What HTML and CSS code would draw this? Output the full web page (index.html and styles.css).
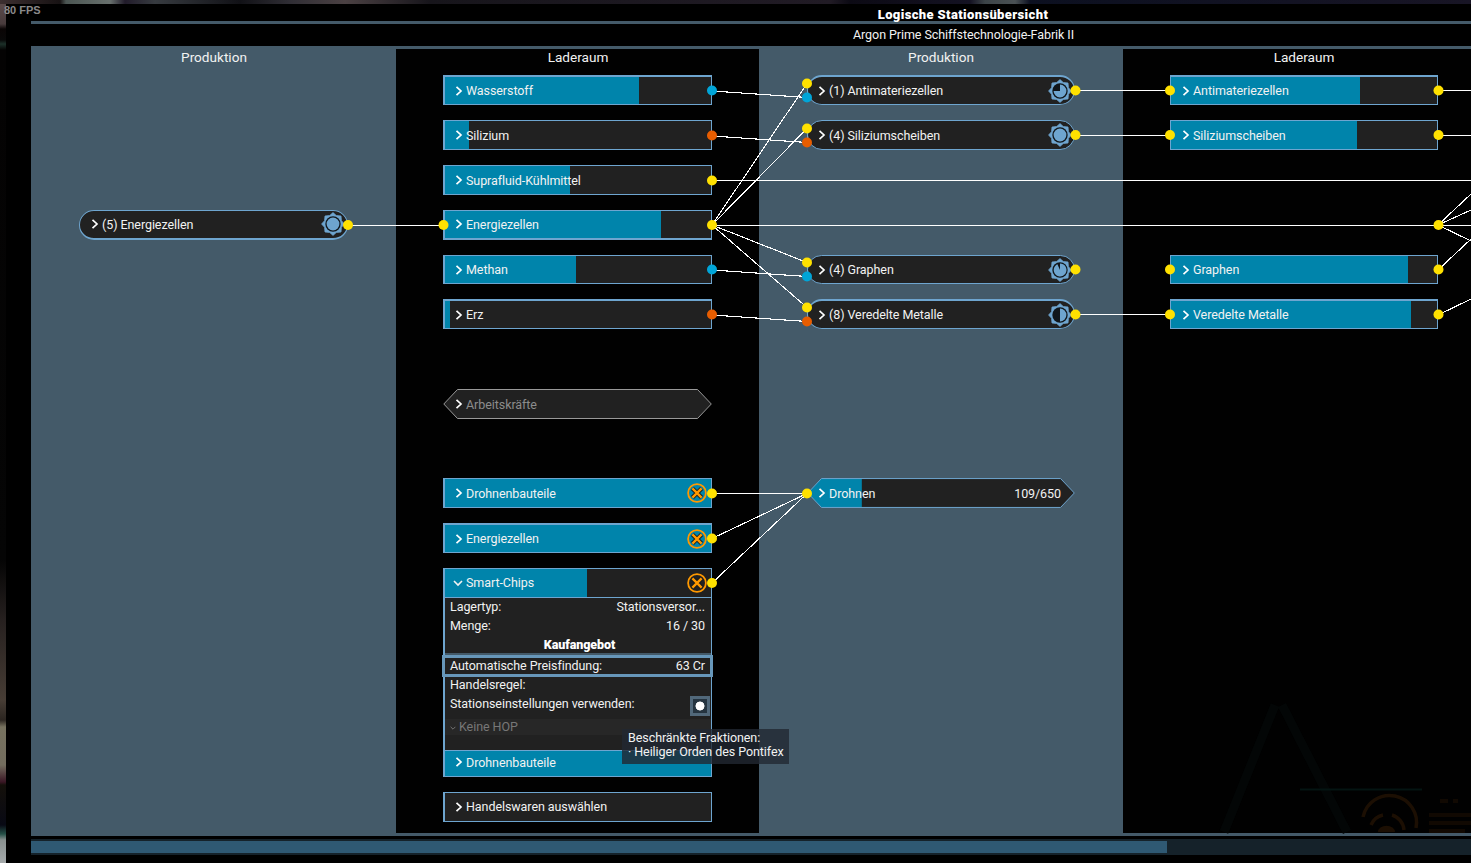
FILE: index.html
```html
<!DOCTYPE html>
<html lang="de">
<head>
  <meta charset="utf-8">
  <title>Logische Stationsübersicht</title>
  <link rel="stylesheet" href="styles.css">
</head>
<body>
<svg class="defs" width="0" height="0">
  <symbol id="right" viewBox="0 0 8 10"><path d="M1.5 .8 L6 5 L1.5 9.2" fill="none" stroke="#fff" stroke-width="1.7"/></symbol>
  <symbol id="down" viewBox="0 0 10 8"><path d="M1 2 L5 6 L9 2" fill="none" stroke="currentColor" stroke-width="1.6"/></symbol>
  <symbol id="gear" viewBox="-12 -12 24 24">
    <path d="M0 -11.4 L3.3 -8.4 L8 -8 L8.4 -3.3 L11.4 0 L8.4 3.3 L8 8 L3.3 8.4 L0 11.4 L-3.3 8.4 L-8 8 L-8.4 3.3 L-11.4 0 L-8.4 -3.3 L-8 -8 L-3.3 -8.4 Z" fill="#6ea5cf" stroke="#6ea5cf" stroke-width=".8" stroke-linejoin="round"/>
    <circle r="7.7" fill="#10161b"/>
  </symbol>
  <symbol id="stop" viewBox="-10 -10 20 20">
    <circle r="8.9" fill="none" stroke="#ff9900" stroke-width="1.8"/>
    <path d="M-4.6 -4.6 L4.6 4.6 M4.6 -4.6 L-4.6 4.6" stroke="#15191b" stroke-width="4.2"/>
    <path d="M-4.6 -4.6 L4.6 4.6 M4.6 -4.6 L-4.6 4.6" stroke="#ff9900" stroke-width="2.4"/>
  </symbol>
</svg>

<div class="fps">80 FPS</div>
<div class="window">
  <h1 class="title">Logische Stationsübersicht</h1>
  <div class="subtitle">Argon Prime Schiffstechnologie-Fabrik II</div>

  <div class="board">
    <div class="column production first">
      <h2>Produktion</h2>
      <div class="nodes">
        <div class="node pill r4"><svg class="caret"><use href="#right"/></svg><span>(5) Energiezellen</span>
          <svg class="gear" viewBox="-12 -12 24 24"><use href="#gear" x="-12" y="-12" width="24" height="24"/><circle r="6.4" fill="#6ea5cf"/></svg></div>
      </div>
    </div>

    <div class="column storage second">
      <h2>Laderaum</h2>
      <div class="nodes">
        <div class="node r1"><div class="fill" style="width: 194px"></div><svg class="caret"><use href="#right"/></svg><span>Wasserstoff</span></div>
        <div class="node r2"><div class="fill" style="width: 24px"></div><svg class="caret"><use href="#right"/></svg><span>Silizium</span></div>
        <div class="node r3"><div class="fill" style="width: 125px"></div><svg class="caret"><use href="#right"/></svg><span>Suprafluid-Kühlmittel</span></div>
        <div class="node r4"><div class="fill" style="width: 216px"></div><svg class="caret"><use href="#right"/></svg><span>Energiezellen</span></div>
        <div class="node r5"><div class="fill" style="width: 131px"></div><svg class="caret"><use href="#right"/></svg><span>Methan</span></div>
        <div class="node r6"><div class="fill" style="width: 5px"></div><svg class="caret"><use href="#right"/></svg><span>Erz</span></div>
        <div class="node hex r8">
          <svg class="shape" viewBox="0 0 269 30"><path d="M.8 15 L14.5 .5 H254.5 L268.3 15 L254.5 29.5 H14.5 Z" fill="#212121" stroke="#999"/></svg>
          <svg class="caret"><use href="#right"/></svg><span class="muted">Arbeitskräfte</span></div>
        <div class="node r10"><div class="fill" style="width: 266px"></div><svg class="caret"><use href="#right"/></svg><span>Drohnenbauteile</span><svg class="stop"><use href="#stop"/></svg></div>
        <div class="node r11"><div class="fill" style="width: 266px"></div><svg class="caret"><use href="#right"/></svg><span>Energiezellen</span><svg class="stop"><use href="#stop"/></svg></div>
        <div class="expanded r12">
          <div class="node"><div class="fill" style="width: 142px"></div><svg class="caret open"><use href="#down"/></svg><span>Smart-Chips</span><svg class="stop"><use href="#stop"/></svg></div>
          <div class="details">
            <div class="row"><span>Lagertyp:</span><span>Stationsversor...</span></div>
            <div class="row"><span>Menge:</span><span>16 / 30</span></div>
            <div class="row offer">Kaufangebot</div>
            <div class="row selected"><span>Automatische Preisfindung:</span><span>63 Cr</span></div>
            <div class="row"><span>Handelsregel:</span></div>
            <div class="row"><span>Stationseinstellungen verwenden:</span><i class="check"></i></div>
            <div class="dropdown"><svg viewBox="0 0 10 8"><use href="#down"/></svg>Keine HOP</div>
          </div>
        </div>
        <div class="node r16"><div class="fill" style="width: 266px"></div><svg class="caret"><use href="#right"/></svg><span>Drohnenbauteile</span></div>
        <div class="node r17"><svg class="caret"><use href="#right"/></svg><span>Handelswaren auswählen</span></div>
      </div>
    </div>

    <div class="column production third">
      <h2>Produktion</h2>
      <div class="nodes">
        <div class="node pill r1"><svg class="caret"><use href="#right"/></svg><span>(1) Antimateriezellen</span>
          <svg class="gear" viewBox="-12 -12 24 24"><use href="#gear" x="-12" y="-12" width="24" height="24"/><path d="M0 0 V-6.4 A6.4 6.4 0 1 1 -6.4 0 Z" fill="#6ea5cf"/></svg></div>
        <div class="node pill r2"><svg class="caret"><use href="#right"/></svg><span>(4) Siliziumscheiben</span>
          <svg class="gear" viewBox="-12 -12 24 24"><use href="#gear" x="-12" y="-12" width="24" height="24"/><circle r="6.4" fill="#6ea5cf"/></svg></div>
        <div class="node pill r5"><svg class="caret"><use href="#right"/></svg><span>(4) Graphen</span>
          <svg class="gear" viewBox="-12 -12 24 24"><use href="#gear" x="-12" y="-12" width="24" height="24"/><path d="M0 0 V-6.4 A6.4 6.4 0 1 1 -2.6 -5.8 Z" fill="#6ea5cf"/></svg></div>
        <div class="node pill r6"><svg class="caret"><use href="#right"/></svg><span>(8) Veredelte Metalle</span>
          <svg class="gear" viewBox="-12 -12 24 24"><use href="#gear" x="-12" y="-12" width="24" height="24"/><path d="M0 -6.4 A6.4 6.4 0 0 1 0 6.4 Z" fill="#6ea5cf"/></svg></div>
        <div class="node hex r10">
          <svg class="shape" viewBox="0 0 269 30">
            <path d="M.8 15 L14.5 .5 H254.5 L268.3 15 L254.5 29.5 H14.5 Z" fill="#212121"/>
            <path d="M.8 15 L14.5 .5 H55 V29.5 H14.5 Z" fill="#0084ab"/>
            <path d="M.8 15 L14.5 .5 H254.5 L268.3 15 L254.5 29.5 H14.5 Z" fill="none" stroke="#6ea5cf"/>
          </svg>
          <svg class="caret"><use href="#right"/></svg><span>Drohnen</span><span class="amount">109/650</span></div>
      </div>
    </div>

    <div class="column storage fourth">
      <h2>Laderaum</h2>
      <div class="nodes">
        <div class="node r1"><div class="fill" style="width: 189px"></div><svg class="caret"><use href="#right"/></svg><span>Antimateriezellen</span></div>
        <div class="node r2"><div class="fill" style="width: 186px"></div><svg class="caret"><use href="#right"/></svg><span>Siliziumscheiben</span></div>
        <div class="node r5"><div class="fill" style="width: 237px"></div><svg class="caret"><use href="#right"/></svg><span>Graphen</span></div>
        <div class="node r6"><div class="fill" style="width: 240px"></div><svg class="caret"><use href="#right"/></svg><span>Veredelte Metalle</span></div>
      </div>
    </div>

    <!-- connections and ports between the nodes -->
    <svg class="links" viewBox="31 46 1440 790">
      <g stroke="#fff" stroke-width="1.1" fill="none" shape-rendering="crispEdges">
        <path d="M348 225.5 H444 M712 180.5 H1471 M712 225.5 H1471 M1075 90.5 H1170 M1075 135.5 H1170 M1075 314.5 H1170 M1438 90.5 H1471 M1438 135.5 H1471 M712 493.5 H807"/>
        <path d="M712 91 L807 97.500 M712 136 L807 142.500 M712 270 L807 276.500 M712 315 L807 321.500"/>
        <path d="M712 225 L807 83.500 M712 225 L807 128.500 M712 225 L807 262.500 M712 225 L807 307.500"/>
        <path d="M712 538.500 L807 493.500 L712 583"/>
        <path d="M1438 225 L1471 194 M1438 225 L1471 210 M1438 225 L1471 241 M1438 270 L1471 239 M1438 315 L1471 299"/>
      </g>
      <g stroke="#6ea5cf" shape-rendering="crispEdges">
        <path d="M807.500 84 V97 M807.500 129 V142 M807.500 263 V276 M807.500 308 V321"/>
      </g>
      <g fill="#ffe100">
        <circle cx="348" cy="225" r="5"/><circle cx="443.500" cy="225" r="5"/>
        <circle cx="712" cy="180.500" r="5"/><circle cx="712" cy="225" r="5"/>
        <circle cx="807" cy="83.500" r="5"/><circle cx="807" cy="128.500" r="5"/>
        <circle cx="807" cy="262.500" r="5"/><circle cx="807" cy="307.500" r="5"/>
        <circle cx="1075.500" cy="90.500" r="5"/><circle cx="1075.500" cy="135" r="5"/>
        <circle cx="1075.500" cy="269.500" r="5"/><circle cx="1075.500" cy="314.500" r="5"/>
        <circle cx="1170" cy="90.500" r="5"/><circle cx="1170" cy="135" r="5"/>
        <circle cx="1170" cy="269.500" r="5"/><circle cx="1170" cy="314.500" r="5"/>
        <circle cx="1438.500" cy="90.500" r="5"/><circle cx="1438.500" cy="135" r="5"/>
        <circle cx="1438.500" cy="225" r="5"/>
        <circle cx="1438.500" cy="269.500" r="5"/><circle cx="1438.500" cy="314.500" r="5"/>
        <circle cx="712" cy="493.500" r="5"/><circle cx="712" cy="538.500" r="5"/><circle cx="712" cy="583" r="5"/>
        <circle cx="807" cy="493.500" r="5"/>
      </g>
      <g fill="#00a5d8">
        <circle cx="712" cy="90.500" r="5"/><circle cx="712" cy="269.500" r="5"/>
        <circle cx="807" cy="97.500" r="5"/><circle cx="807" cy="276.500" r="5"/>
      </g>
      <g fill="#e85d00">
        <circle cx="712" cy="135.500" r="5"/><circle cx="712" cy="314.500" r="5"/>
        <circle cx="807" cy="142.500" r="5"/><circle cx="807" cy="321.500" r="5"/>
      </g>
      <!-- faint cockpit display behind the window -->
      <g fill="none" stroke="#1c0f03" stroke-width="3.500">
        <path d="M1363 817 A27 27 0 0 1 1416 828"/>
        <path d="M1371 825 A17 17 0 0 1 1383 815 M1392 815 A17 17 0 0 1 1404 830"/>
        <path d="M1378 832 A8 6 0 0 1 1395 832 Z" fill="#1c0f03" stroke="none"/>
      </g>
      <g stroke="#110902" stroke-width="4">
        <path d="M1440 801 H1448 M1453 801 H1458 M1429 815 H1471 M1429 823 H1471 M1429 831 H1465"/>
      </g>
      <g fill="none" stroke="#030606" stroke-width="9">
        <path d="M1224 832 L1275 705 M1282 705 L1347 832"/>
        <path d="M1300 789.500 H1422" stroke="#041412" stroke-width="2"/>
      </g>
    </svg>
    <div class="tooltip">Beschränkte Fraktionen:<br>· Heiliger Orden des Pontifex</div>
  </div>

  <div class="scrollbar"><div class="thumb"></div></div>
</div>
</body>
</html>
```
FILE: styles.css
```css
* {
  box-sizing: border-box;
}
body {
  margin: 0;
  height: 863px;
  overflow: hidden;
  color: #f2f2f2;
  font: 12.5px/19px Roboto, sans-serif;
  letter-spacing: -.07px;
  background:
    linear-gradient(90deg, #3c2f30 0, #171213 60px, #4b5552 66px, #68706d 110px, #211b2a 125px, #373b40 155px, #111116 240px, #302e35 290px, #4b4143 345px, #17151b 430px, #211b25 830px, #0c0a14 850px, #141222 970px, #3c4448 985px, #4a5154 1015px, #0c1020 1030px, #181525 1471px) 0 0 / 100% 4px no-repeat,
    linear-gradient(#5e4d4d 0, #483b3c 24px, #0a0505 29px, #090909 40px, #1c3029 44px, #040303 50px, #050505 560px, #26201f 620px, #473d35 700px, #2b2520 720px, #77725f 727px, #736d5e 765px, #3a1624 782px, #14100a 785px, #080914 825px, #245047 834px, #89908f 840px, #a5aaab 863px) 0 0 / 6px 100% no-repeat,
    #000;
}
.defs {
  position: absolute;
}
.fps {
  position: absolute;
  left: 4px;
  top: 4px;
  font: bold 11px/13px "Liberation Sans", sans-serif;
  letter-spacing: 0;
  color: #8a8a8a;
}
.window {
  padding-top: 7px;
  margin-left: 31px;
}
.title {
  height: 17px;
  margin: 0;
  padding-left: 424px;
  border-bottom: 3px solid #445a69;
  font-size: 13px;
  line-height: 15px;
  font-weight: 900;
  letter-spacing: .37px;
  text-align: center;
  color: #fff;
}
.subtitle {
  height: 22px;
  padding-left: 425px;
  line-height: 21px;
  font-size: 12.5px;
  text-align: center;
}

/* station board */
.board {
  position: relative;
  display: flex;
  height: 790px;
  border: solid #445a69;
  border-width: 3px 0;
}
.column {
  flex: none;
  width: 364px;
  padding-left: 48px;
  background: #445a69;
}
.first {
  width: 365px;
}
.second {
  width: 363px;
  padding-left: 47px;
}
.fourth {
  flex: 1;
  padding-left: 47px;
}
.storage {
  background: #010101;
}
.column h2 {
  width: 270px;
  height: 26.4px;
  margin: 0;
  font-size: 13.6px;
  line-height: 16px;
  font-weight: 400;
  letter-spacing: 0;
  text-align: center;
}
.third h2,
.fourth h2 {
  width: 268px;
}
.nodes {
  display: grid;
  grid-template-rows: repeat(17, 44.78px);
  width: 269px;
}
.third .nodes,
.fourth .nodes {
  width: 268px;
}
.r1 { grid-row: 1; }
.r2 { grid-row: 2; }
.r3 { grid-row: 3; }
.r4 { grid-row: 4; }
.r5 { grid-row: 5; }
.r6 { grid-row: 6; }
.r8 { grid-row: 8; }
.r10 { grid-row: 10; }
.r11 { grid-row: 11; }
.r12 { grid-row: 12; }
.r16 { grid-row: 16; }
.r17 { grid-row: 17; }

.node {
  position: relative;
  display: flex;
  align-items: center;
  height: 30px;
  padding-left: 10px;
  border: 1px solid #6ea5cf;
  border-left-width: 2px;
  background: #212121;
  line-height: 28px;
}
.node.r1,
.node.r6,
.node.r11 {
  border-top-width: 2px;
}
.node.r4 {
  border-bottom-width: 2px;
}
.node.r5 {
  height: 29px;
  margin-top: .6px;
}
.fourth .node {
  border-left-width: 1px;
  padding-left: 11px;
}
.node span {
  position: relative;
  padding-top: 1px;
}
.r3 span,
.r4 span,
.r8 span,
.r16 span {
  padding-top: 2px;
}
.pill {
  border-left-width: 1px;
  padding-left: 11px;
  border-radius: 15px;
}
.third .pill {
  padding-left: 10px;
}
.hex {
  border-color: transparent;
  background: none;
}
.third .hex {
  padding-left: 9px;
}
.hex .amount {
  margin-left: auto;
  margin-right: 13px;
}
.muted {
  color: #8c8c8c;
}
.fill {
  position: absolute;
  left: 0;
  top: 0;
  bottom: 0;
  background: #0084ab;
}
.shape {
  position: absolute;
  left: -2px;
  top: -1px;
  width: 269px;
  height: 30px;
}
.third .shape {
  width: 268px;
}
.caret {
  position: relative;
  width: 8px;
  height: 12px;
  margin-right: 3px;
}
.caret.open {
  width: 10px;
  height: 8px;
  margin: 0 3px 0 -2px;
}
.gear {
  width: 24px;
  height: 24px;
  margin: 0 2px 0 auto;
}
.stop {
  position: relative;
  width: 20px;
  height: 20px;
  margin: 0 4px 0 auto;
}

/* opened storage node */
.expanded {
  z-index: 1;
  height: 183px;
}
.details {
  height: 153px;
  border: solid #6ea5cf;
  border-width: 0 1px 1px 2px;
  background: #212121;
}
.row {
  display: flex;
  justify-content: space-between;
  height: 19px;
  padding: 0 6px 0 5px;
  line-height: 17px;
}
.offer {
  justify-content: center;
  height: 20px;
  padding-left: 9px;
  border-bottom: 3px solid #445a69;
  font-weight: 900;
  color: #fff;
}
.selected {
  height: 22px;
  margin: -1px -2px -1px -3px;
  padding: 0 5px;
  border: 3px solid #6797ba;
  line-height: 15px;
}
.check {
  flex: none;
  width: 20px;
  height: 20px;
  margin: 1px -5px 0 0;
  border: 3px solid #51687a;
  background: radial-gradient(circle, #fff 4.2px, #253440 4.8px);
}
.dropdown {
  height: 16px;
  margin-top: 5px;
  padding-left: 5px;
  line-height: 16px;
  background: #272727;
  color: #777;
}
.dropdown svg {
  width: 6px;
  height: 6px;
  margin-right: 3px;
}

.links {
  position: absolute;
  left: 0;
  top: -3px;
  width: 1440px;
  height: 790px;
  z-index: 2;
}
.tooltip {
  position: absolute;
  left: 591px;
  top: 680px;
  z-index: 3;
  width: 167px;
  height: 35px;
  padding: 2px 6px;
  line-height: 14.4px;
  white-space: nowrap;
  background: rgba(34, 40, 50, .8);
}
.scrollbar {
  height: 16px;
  margin-top: 3px;
  padding: 2px 0;
  background: #15222a;
}
.thumb {
  width: 1136px;
  height: 12px;
  background: #2f5973;
}
```
